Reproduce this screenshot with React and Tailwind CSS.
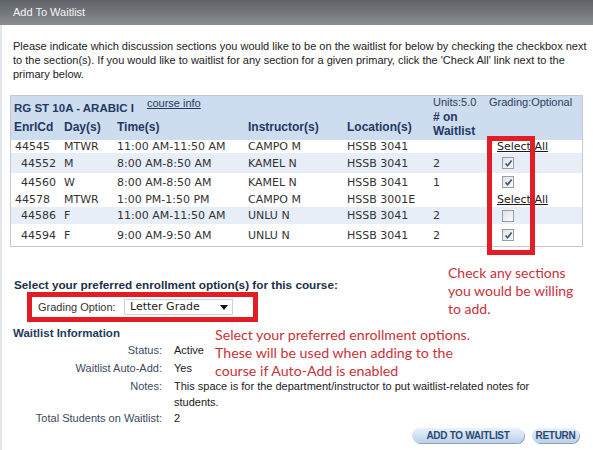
import React from "react";

const rows = [
  { id: "44545", primary: true, day: "MTWR", time: "11:00 AM-11:50 AM", instr: "CAMPO M", loc: "HSSB 3041", wl: "", sel: "all", h: "h-[13px]", bg: "" },
  { id: "44552", day: "M", time: "8:00 AM-8:50 AM", instr: "KAMEL N", loc: "HSSB 3041", wl: "2", sel: "on", h: "h-[20px]", bg: "bg-[#e7eef8]" },
  { id: "44560", day: "W", time: "8:00 AM-8:50 AM", instr: "KAMEL N", loc: "HSSB 3041", wl: "1", sel: "on", h: "h-[18px]", bg: "" },
  { id: "44578", primary: true, day: "MTWR", time: "1:00 PM-1:50 PM", instr: "CAMPO M", loc: "HSSB 3001E", wl: "", sel: "all", h: "h-[16px]", bg: "" },
  { id: "44586", day: "F", time: "11:00 AM-11:50 AM", instr: "UNLU N", loc: "HSSB 3041", wl: "2", sel: "off", h: "h-[17px]", bg: "bg-[#e7eef8]" },
  { id: "44594", day: "F", time: "9:00 AM-9:50 AM", instr: "UNLU N", loc: "HSSB 3041", wl: "2", sel: "on", h: "h-[22px]", bg: "" },
];

function Checkbox({ checked }) {
  return (
    <div className="w-[12px] h-[12px] border border-[#9b9fa4] bg-gradient-to-br from-[#dfe2e6] to-[#fbfbfb] flex items-center justify-center">
      {checked && (
        <svg width="9" height="9" viewBox="0 0 9 9">
          <path d="M1.5 4.5 L3.6 6.8 L7.6 1.6" fill="none" stroke="#45557a" strokeWidth="1.7" />
        </svg>
      )}
    </div>
  );
}

export default function App() {
  return (
    <div className="relative w-[593px] h-[450px] overflow-hidden bg-white font-['Liberation_Sans',Arial,sans-serif]">
      <div className="h-[25px] bg-gradient-to-b from-[#5e6166] to-[#8a8d92] flex items-center pl-[13px] text-[11px] text-[#f5f5f5]">
        Add To Waitlist
      </div>
      <div className="h-[425px] border-l-2 border-[#e1e7ee]">
        <p className="pt-[14px] pl-[11px] text-[11px] leading-[14px] text-[#222] whitespace-nowrap">
          Please indicate which discussion sections you would like to be on the waitlist for below by checking the checkbox next
          <br />
          to the section(s). If you would like to waitlist for any section for a given primary, click the 'Check All' link next to the
          <br />
          primary below.
        </p>

        <div className="mt-[14px] ml-[8px] w-[573px] border border-[#c6cacf]">
          <div className="bg-[#cedcef] text-[#1f3a60]">
            <div className="h-[17px] flex items-start">
              <div className="w-[422px] flex items-start pl-[3px]">
                <span className="pt-[5px] text-[11.5px] leading-[14px] font-bold whitespace-nowrap">RG ST 10A - ARABIC I</span>
                <span className="ml-[13px] text-[11px] leading-[14px] underline">course info</span>
              </div>
              <span className="w-[56px] text-[11px] leading-[12px] text-[#2a3f5c]">Units:5.0</span>
              <span className="text-[11px] leading-[12px] text-[#2a3f5c]">Grading:Optional</span>
            </div>
            <div className="h-[27px] flex items-center text-[12px] font-bold leading-[14px]">
              <div className="w-[53px] pl-[3px]">EnrlCd</div>
              <div className="w-[53px]">Day(s)</div>
              <div className="w-[131px]">Time(s)</div>
              <div className="w-[99px]">Instructor(s)</div>
              <div className="w-[86px]">Location(s)</div>
              <div className="w-[64px] self-start -mt-[3px]">
                # on
                <br />
                Waitlist
              </div>
              <div className="flex-1" />
            </div>
          </div>
          <div className="font-['DejaVu_Sans',Verdana,sans-serif] text-[11px] text-[#333]">
            {rows.map((r) => (
              <div key={r.id} className={`flex items-center ${r.h} ${r.bg} leading-[13px]`}>
                <div className={`w-[53px] ${r.primary ? "pl-[4px]" : "pl-[10px]"}`}>{r.id}</div>
                <div className="w-[53px]">{r.day}</div>
                <div className="w-[131px]">{r.time}</div>
                <div className="w-[99px]">{r.instr}</div>
                <div className="w-[86px]">{r.loc}</div>
                <div className="w-[64px]">{r.wl}</div>
                <div className="flex-1">
                  {r.sel === "all" ? (
                    <span className="underline text-[#1a1a1a]">Select All</span>
                  ) : (
                    <div className="pl-[5px]">
                      <Checkbox checked={r.sel === "on"} />
                    </div>
                  )}
                </div>
              </div>
            ))}
          </div>
        </div>

        <div className="mt-[31px] pl-[12px] text-[11.75px] leading-[14px] font-bold text-[#1d2f45] whitespace-nowrap">
          Select your preferred enrollment option(s) for this course:
        </div>
        <div className="ml-[25px] w-[231px] h-[30px] border-[5px] border-[#e31d25] flex items-center">
          <span className="w-[92px] pl-[6px] text-[11px] text-[#333]">Grading Option:</span>
          <div className="w-[109px] h-[16px] border border-[#cfd2d6] bg-white flex items-center justify-between pl-[5px] pr-[4px] font-['DejaVu_Sans',Verdana,sans-serif] text-[11px] text-[#222]">
            <span>Letter Grade</span>
            <svg width="8" height="5" viewBox="0 0 8 5">
              <polygon points="0,0 8,0 4,5" fill="#111" />
            </svg>
          </div>
        </div>
        <div className="mt-[4px] pl-[11px] text-[11.5px] leading-[14px] font-bold text-[#1e3a5c]">Waitlist Information</div>
        <div className="mt-[1px] ml-[11px] grid grid-cols-[149px_1fr] gap-x-[12px] text-[11px]">
          <div className="text-right leading-[18px] text-[#3d4a5c]">Status:</div>
          <div className="leading-[18px] text-[#1a1a1a]">Active</div>
          <div className="text-right leading-[18px] text-[#3d4a5c]">Waitlist Auto-Add:</div>
          <div className="leading-[18px] text-[#1a1a1a]">Yes</div>
          <div className="text-right leading-[18px] text-[#3d4a5c] h-[33px]">Notes:</div>
          <div className="pt-[1px] leading-[16px] text-[#1a1a1a] whitespace-nowrap">
            This space is for the department/instructor to put waitlist-related notes for
            <br />
            students.
          </div>
          <div className="text-right leading-[16px] text-[#3d4a5c]">Total Students on Waitlist:</div>
          <div className="leading-[16px] text-[#1a1a1a]">2</div>
        </div>
        <div className="mt-[2px] flex justify-end gap-[8px] pr-[14px]">
          <div className="w-[112px] h-[15px] rounded-full bg-gradient-to-b from-[#eaf2fc] to-[#bcd0e8] shadow-[1px_1px_0_#8da3bf] flex items-center justify-center text-[10px] font-bold tracking-[-0.3px] text-[#2b4a72]">
            ADD TO WAITLIST
          </div>
          <div className="w-[47px] h-[15px] rounded-full bg-gradient-to-b from-[#eaf2fc] to-[#bcd0e8] shadow-[1px_1px_0_#8da3bf] flex items-center justify-center text-[10px] font-bold tracking-[-0.3px] text-[#2b4a72]">
            RETURN
          </div>
        </div>
      </div>

      <div className="absolute left-[487px] top-[136px] w-[48px] h-[119px] border-[5px] border-[#e31d25]" />
      <div className="absolute left-[448px] top-[264px] font-['Lato',sans-serif] text-[14px] leading-[18px] text-[#c8323a] whitespace-nowrap">
        Check any sections
        <br />
        you would be willing
        <br />
        to add.
      </div>
      <div className="absolute left-[215px] top-[326px] font-['Lato',sans-serif] text-[14.2px] leading-[18px] text-[#c8323a] whitespace-nowrap">
        Select your preferred enrollment options.
        <br />
        These will be used when adding to the
        <br />
        course if Auto-Add is enabled
      </div>
    </div>
  );
}
